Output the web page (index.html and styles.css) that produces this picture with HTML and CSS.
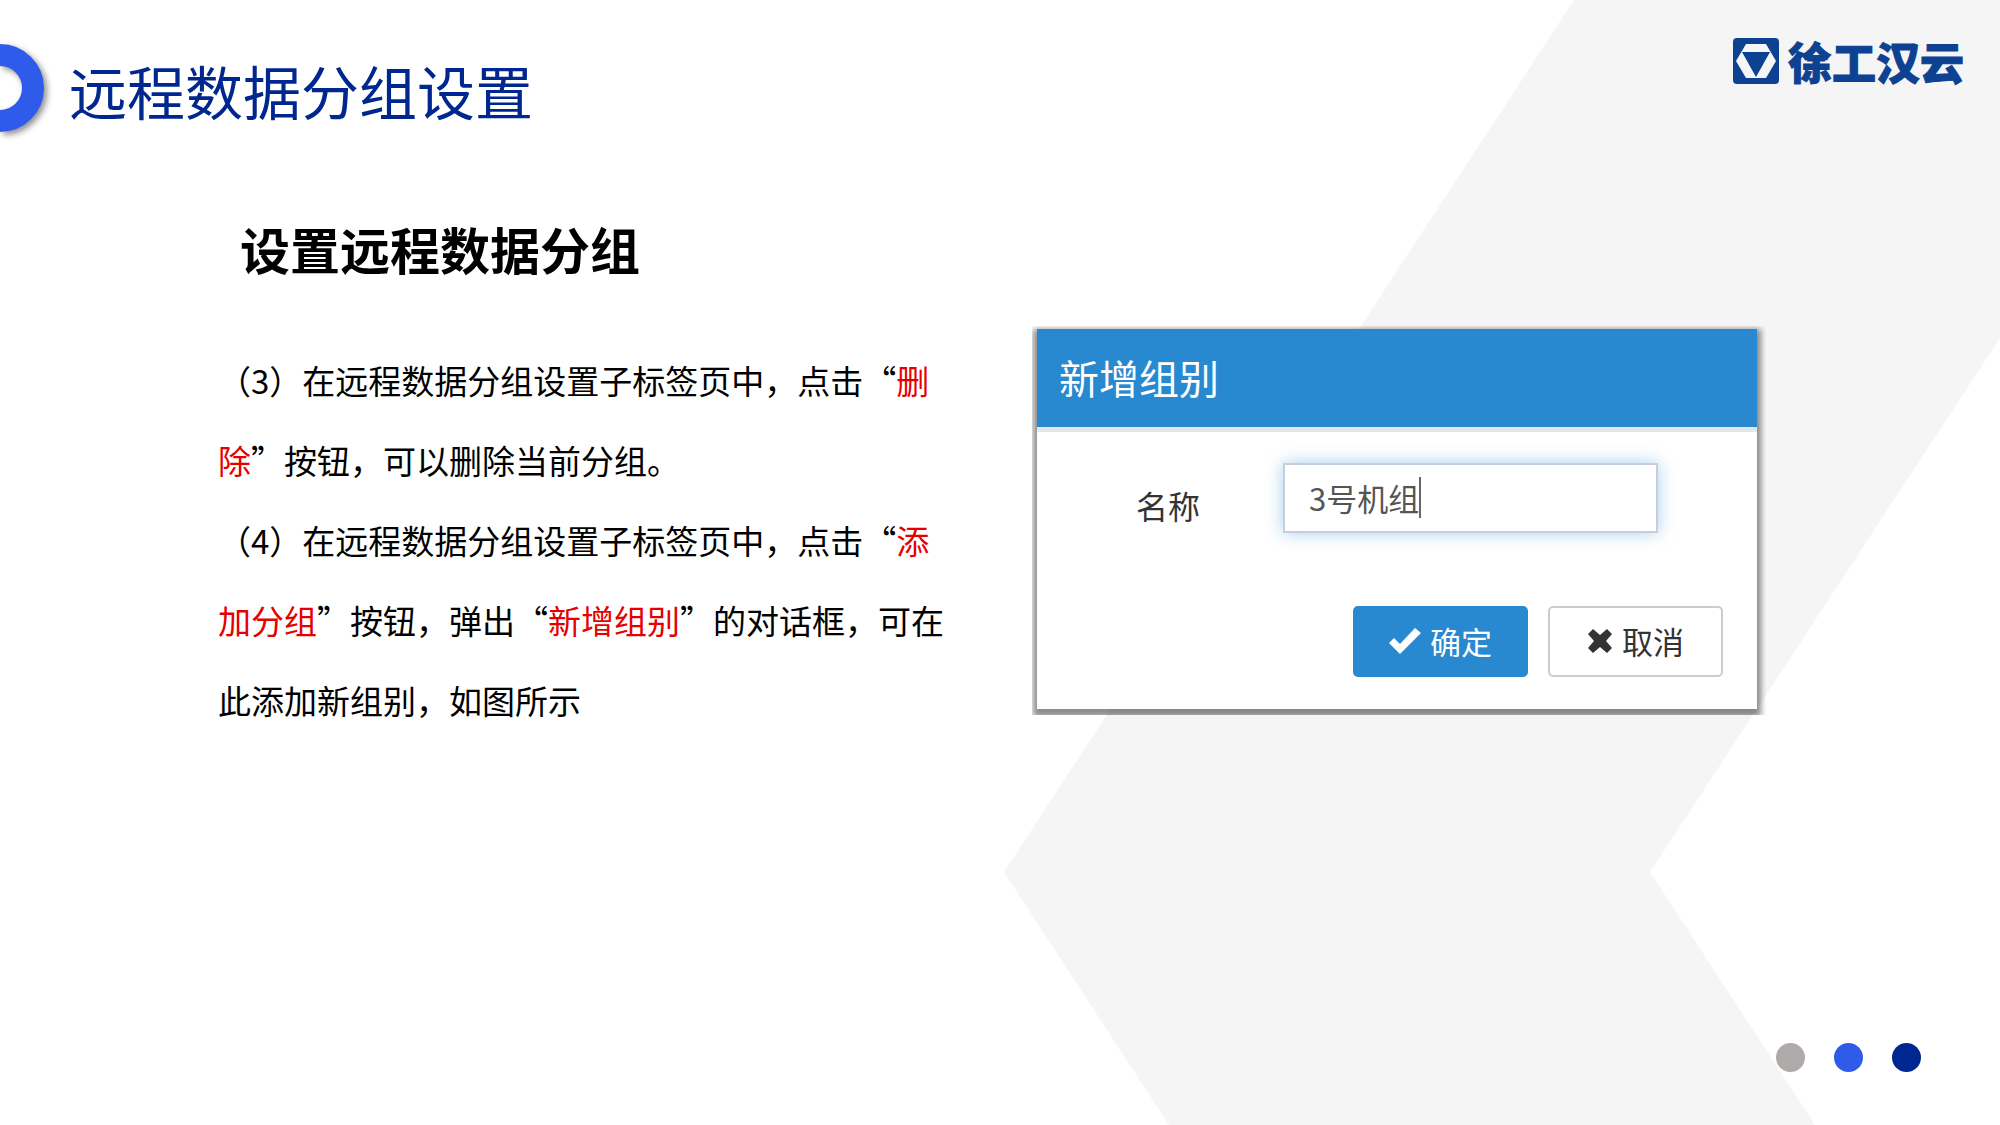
FILE: index.html
```html
<!DOCTYPE html>
<html lang="zh-CN">
<head>
    <meta charset="UTF-8">
    <title>远程数据分组设置</title>
    <link rel="stylesheet" href="styles.css">
</head>
<body>
    <svg class="backdrop" viewBox="0 0 2000 1125" preserveAspectRatio="none" aria-hidden="true">
        <polygon points="1574,0 2000,0 2000,338 1650,872 1815,1125 1169,1125 1004,872" fill="#f5f5f5"/>
    </svg>

    <header class="top">
        <svg class="ring" viewBox="0 0 56 100" aria-hidden="true">
            <circle cx="0" cy="50" r="33" fill="none" stroke="#2f5bea" stroke-width="22"/>
        </svg>
        <h1>远程数据分组设置</h1>
        <div class="logo">
            <svg viewBox="0 0 46 46" aria-hidden="true">
                <rect width="46" height="46" rx="4" fill="#0d4191"/>
                <path d="M13 6h20l10 17-10 17H13L3 23z" fill="#f5f5f5"/>
                <path d="M9 14h28L23 39z" fill="#0d4191"/>
            </svg>
            <span>徐工汉云</span>
        </div>
    </header>

    <main>
        <section class="text">
            <h2>设置远程数据分组</h2>
            <p>（3）在远程数据分组设置子标签页中，点击“<em>删除</em>”按钮，可以删除当前分组。</p>
            <p>（4）在远程数据分组设置子标签页中，点击“<em>添加分组</em>”按钮，弹出“<em>新增组别</em>”的对话框，可在此添加新组别，如图所示</p>
        </section>

        <div class="frame">
            <form class="dialog">
                <h3>新增组别</h3>
                <div class="row">
                    <label for="name">名称</label>
                    <div class="field">
                        <input type="text" id="name" value="3号机组">
                        <span class="caret"></span>
                    </div>
                </div>
                <div class="actions">
                    <button type="button" class="primary">
                        <svg width="32" height="28" viewBox="0 0 32 28" aria-hidden="true"><path d="M0 16l5-5 6 6L26 1l6 5-21 21z" fill="#fff"/></svg>
                        确定
                    </button>
                    <button type="button">
                        <svg width="26" height="26" viewBox="0 0 26 26" aria-hidden="true"><path d="M6 1l7 6 7-6 5 5-6 7 6 7-5 5-7-6-7 6-5-5 6-7-6-7z" fill="#333"/></svg>
                        取消
                    </button>
                </div>
            </form>
        </div>
    </main>

    <footer class="dots">
        <span class="gray"></span>
        <span class="blue"></span>
        <span class="navy"></span>
    </footer>
</body>
</html>
```

FILE: styles.css
```css
* { box-sizing: border-box; }
body { margin: 0; min-height: 100vh; display: flex; flex-direction: column; background: #fff; color: #000; font-family: "Noto Sans CJK SC", sans-serif; }
h1, h2, h3, p { margin: 0; }

.backdrop { position: absolute; top: 0; left: 0; width: 100%; height: 100%; z-index: -1; }

.top { display: flex; align-items: flex-start; padding: 38px 36px 0 0; }
.ring { width: 56px; height: 100px; filter: drop-shadow(3px 3px 3px rgba(0, 0, 0, 0.45)); }
h1 { margin-left: 13px; font-size: 58px; font-weight: 400; line-height: 104px; color: #00278f; }
.logo { display: flex; align-items: center; gap: 9px; margin-left: auto; color: #0d4191; }
.logo svg { width: 46px; height: 46px; }
.logo span { font-size: 44px; font-weight: 900; line-height: 46px; -webkit-text-stroke: 1px #0d4191; }

main { display: grid; grid-template-columns: 735fr 734fr; column-gap: 79px; align-items: start; padding: 66px 234px 0 218px; }
h2 { padding-left: 22px; margin-bottom: 52px; font-size: 50px; font-weight: 700; line-height: 80px; }
.text p { font-size: 33px; line-height: 80px; }
.text em { font-style: normal; color: #e60000; }

.frame { margin-top: 118px; padding: 3px 9px 6px 5px; overflow: hidden; }
.dialog { background: #fff; box-shadow: 0 4px 6px 4px rgba(0, 0, 0, 0.45); }
.dialog h3 { height: 103px; padding-left: 22px; border-bottom: 5px solid #e3e6ea; background: #2989d0; background-clip: padding-box; color: #fff; font-size: 40px; font-weight: 400; line-height: 96px; }
.row { display: flex; align-items: flex-start; gap: 83px; padding: 31px 99px 0; }
.row label { font-size: 32px; line-height: 84px; color: #333; }
.field { position: relative; flex: 1; }
.field input { display: block; width: 100%; height: 70px; padding: 0 24px 2px; border: 2px solid #c3cfde; color: #555; font: 31px "Noto Sans CJK SC", sans-serif; background: #fff; box-shadow: 0 0 16px rgba(41, 137, 208, 0.4); outline: none; }
.caret { position: absolute; left: 136px; top: 14px; width: 2px; height: 41px; background: #666; }
.actions { display: flex; justify-content: flex-end; gap: 20px; padding: 59px 34px 32px; }
.actions button { display: flex; align-items: center; justify-content: center; gap: 9px; width: 175px; height: 71px; padding-bottom: 3px; border: 2px solid #ccc; border-radius: 5px; background: #fff; color: #333; font: 31px "Noto Sans CJK SC", sans-serif; }
.actions .primary { border-color: #2989d0; background: #2989d0; color: #fff; }

.dots { display: flex; justify-content: flex-end; gap: 29px; margin-top: auto; padding: 0 79px 53px 0; }
.dots span { width: 29px; height: 29px; border-radius: 50%; }
.gray { background: #aeaaaa; }
.blue { background: #2f5bea; }
.navy { background: #00278f; }
```
